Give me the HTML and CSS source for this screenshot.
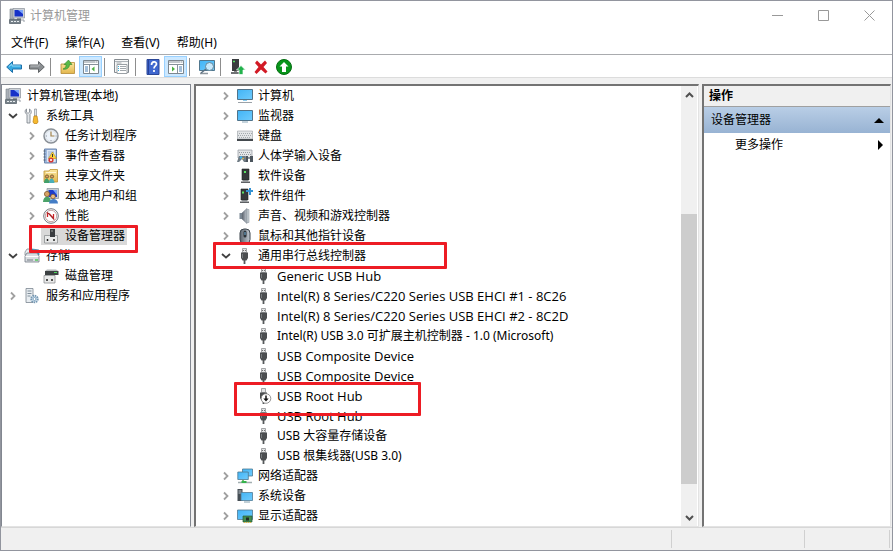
FILE: index.html
```html
<!DOCTYPE html>
<html lang="zh-CN">
<head>
  <meta charset="UTF-8">
  <meta name="viewport" content="width=device-width, initial-scale=1.0">
  <title>计算机管理</title>
  <link rel="stylesheet" href="styles.css">
</head>
<body>
  <svg class="sprite" aria-hidden="true">
    <defs>
      <linearGradient id="screen" x1="0" y1="0" x2="1" y2="1">
        <stop offset="0" stop-color="#42b4f6"/>
        <stop offset="1" stop-color="#6fcbfd"/>
      </linearGradient>
      <linearGradient id="metal" x1="0" y1="0" x2="1" y2="0">
        <stop offset="0" stop-color="#59616b"/>
        <stop offset="1" stop-color="#c3cad2"/>
      </linearGradient>
      <linearGradient id="folder" x1="0" y1="0" x2="0" y2="1">
        <stop offset="0" stop-color="#fbe7a0"/>
        <stop offset="1" stop-color="#e3b64c"/>
      </linearGradient>
    </defs>
    <symbol id="i-right" viewBox="0 0 16 16"><path d="M6 4.500 9.500 8 6 11.500" fill="none" stroke="#a0a0a0" stroke-width="1.800"/></symbol>
    <symbol id="i-down" viewBox="0 0 16 16"><path d="M4 6 8 9.500 12 6" fill="none" stroke="#404040" stroke-width="1.800"/></symbol>
    <symbol id="i-manage" viewBox="0 0 16 16">
      <path d="M1 1h4v10H1z" fill="#aab0b8" stroke="#777f88" stroke-width=".6"/>
      <path d="M4 .5h11.500v9.500H4z" fill="#cdd2d8" stroke="#8a9099" stroke-width=".7"/>
      <path d="M5.500 2h8.500v6.500H5.500z" fill="#1732c8"/>
      <path d="M9 2h5v4z" fill="#7ba4fa"/>
      <path d="M8 10h4v2H8z" fill="#8d949c"/>
      <path d="M.5 11.500h11v4H.5z" fill="#77828a" stroke="#4f5961" stroke-width=".7"/>
      <path d="M2 13.500h2M5 13.500h2M8 13.500h2" stroke="#e9edf0"/>
      <path d="M12 12h3v2" fill="none" stroke="#9aa0a7"/>
    </symbol>
    <symbol id="i-tools" viewBox="0 0 16 16">
      <path d="M2.500 1v3l1.500 1.500L5.500 4V1c2 1 2.500 4 .5 5.500V15H3V6.500C.5 5 .7 2 2.500 1z" fill="#e3e6e9" stroke="#777e86" stroke-width=".8"/>
      <path d="M10.500 1h2v7h-2z" fill="#dfe3e7" stroke="#7b828a" stroke-width=".6"/>
      <path d="M10 8h3l1 6-1 1.500h-3L9 14z" fill="#f5b92e" stroke="#bd8013" stroke-width=".7"/>
    </symbol>
    <symbol id="i-clock" viewBox="0 0 16 16">
      <circle cx="8" cy="8" r="7" fill="#f2f5f8" stroke="#8a9097" stroke-width="1.500"/>
      <circle cx="8" cy="8" r="5.500" fill="#edf3fa" stroke="#c9d0d8" stroke-width=".6"/>
      <path d="M8 3.500V8h3.500" fill="none" stroke="#a3844c" stroke-width="1.200"/>
      <path d="M8 13v-1M3 8h1M12.500 8h1" stroke="#7a828b" stroke-width=".8"/>
    </symbol>
    <symbol id="i-event" viewBox="0 0 16 16">
      <path d="M1.500 1h12v14h-12z" fill="#9db7dc" stroke="#6d86ad"/>
      <path d="M4 2h8.500v12H4z" fill="#dce6f4"/>
      <path d="M5 4h6M5 6h4M5 8h3M5 10h2" stroke="#8ca3c4" stroke-width=".8"/>
      <path d="M.5 3h2M.5 6h2M.5 9h2M.5 12h2" stroke="#54606e"/>
      <path d="m9.500 4 4 6.500h-8z" fill="#ffd93b" stroke="#b98a10" stroke-width=".6"/>
      <path d="M9.500 6v3" stroke="#333"/>
      <circle cx="8" cy="12" r="2.600" fill="#d93a35"/>
      <path d="m7 11 2 2m0-2-2 2" stroke="#fff" stroke-width=".8"/>
    </symbol>
    <symbol id="i-share" viewBox="0 0 16 16">
      <path d="M1 3h5l1-1.500h7.500V14H1z" fill="url(#folder)" stroke="#bd9334" stroke-width=".8"/>
      <path d="M3 4.500h10" stroke="#fff6d4"/>
      <circle cx="4" cy="8.500" r="1.600" fill="#d9a066" stroke="#584019" stroke-width=".7"/>
      <circle cx="9" cy="8.500" r="1.600" fill="#d9a066" stroke="#584019" stroke-width=".7"/>
      <path d="M1 15c0-6 5-6 5.500 0z" fill="#42a06b"/>
      <path d="M6 15c0-6 5-6 5.500 0z" fill="#49aeb9"/>
    </symbol>
    <symbol id="i-users" viewBox="0 0 16 16">
      <path d="M4 .5h11.500v10H4z" fill="#c5cbd3" stroke="#87909a" stroke-width=".7"/>
      <path d="M5.500 2H14v7H5.500z" fill="#1d3dcc"/>
      <path d="M10 2h4v5z" fill="#7aa3f5"/>
      <circle cx="4" cy="6" r="2.600" fill="#d8a366" stroke="#754e22" stroke-width=".7"/>
      <circle cx="10" cy="8.500" r="2.300" fill="#e8bd83" stroke="#754e22" stroke-width=".7"/>
      <path d="M0 14c0-7 8-7 8 0z" fill="#4ba269"/>
      <path d="M6 15.500c0-6 9-6 9 0z" fill="#447dc6"/>
    </symbol>
    <symbol id="i-perf" viewBox="0 0 16 16">
      <circle cx="8" cy="8" r="7.300" fill="#fff" stroke="#737980"/>
      <circle cx="8" cy="8" r="5.700" fill="#fff" stroke="#9b6a6a" stroke-width=".6"/>
      <path d="M4.500 9V5l2 1 4 4.500V6" fill="none" stroke="#cc2327" stroke-width="1.300"/>
      <path d="m4.500 4.500 6.500 7" stroke="#7d2224" stroke-width=".8"/>
    </symbol>
    <symbol id="i-devmgr" viewBox="0 0 16 16">
      <path d="M7 1h5v7H7z" fill="#393c40"/>
      <path d="M8 3h2" stroke="#9aa09c"/>
      <path d="M1.500 7.500h13V15h-13z" fill="#e9eaea" stroke="#8d9092" stroke-width=".8"/>
      <path d="M7 7h5v2H7z" fill="#393c40"/>
      <path d="M4.500 11v2M11 11v2" stroke="#222" stroke-width="1.500"/>
    </symbol>
    <symbol id="i-storage" viewBox="0 0 16 16">
      <path d="M1 4 3 1h5v6H1z" fill="#e7ebef" stroke="#858d96" stroke-width=".8"/>
      <path d="m8 1 7 1v5H8z" fill="#1aa7df" stroke="#4c7890" stroke-width=".7"/>
      <path d="M1 8 3 5h10l2 3v6H1z" fill="#d9dde1" stroke="#737c85" stroke-width=".8"/>
      <path d="M1.500 8.500h13" stroke="#fff"/>
      <path d="M3 12h6" stroke="#747d85"/>
      <path d="M11 12h3" stroke="#51c758" stroke-width="1.500"/>
    </symbol>
    <symbol id="i-disk" viewBox="0 0 16 16">
      <path d="M2 3 4 1.500h9L15.500 3z" fill="#b4b8ba"/>
      <path d="M2 3h13.500v4H2z" fill="#3c4042"/>
      <path d="M11 4.500h3" stroke="#4ed95e"/>
      <path d="M1 7.500h11V15H1z" fill="#e9eaea" stroke="#8d9092" stroke-width=".8"/>
      <path d="M4 11v2M9 11v2" stroke="#222" stroke-width="1.500"/>
    </symbol>
    <symbol id="i-service" viewBox="0 0 16 16">
      <path d="M2 .5h7v14H2z" fill="#e8edf1" stroke="#7b8791" stroke-width=".8"/>
      <path d="M3.500 3h4M3.500 5.500h4M3.500 8h3" stroke="#7f8d99"/>
      <circle cx="10.500" cy="11" r="3.300" fill="#dbe8f2" stroke="#7497b2" stroke-width="1.800" stroke-dasharray="1.500 .7"/>
      <circle cx="10.500" cy="11" r="1.500" fill="#fff" stroke="#5384a9" stroke-width=".7"/>
    </symbol>
    <symbol id="i-computer" viewBox="0 0 16 16">
      <path d="M.5 1.500h15v10H.5z" fill="url(#screen)" stroke="#50738a"/>
      <path d="M1 14.500h14" stroke="#9ba2a8"/><path d="M6 12.500h4" stroke="#8fcdee"/>
    </symbol>
    <symbol id="i-monitor" viewBox="0 0 16 16">
      <path d="M.5 2.500h15v10H.5z" fill="url(#screen)" stroke="#50738a"/>
      <path d="M5 14h6" stroke="#8ba8b9"/>
    </symbol>
    <symbol id="i-keyboard" viewBox="0 0 16 16">
      <path d="M.5 3h15v8H.5z" fill="#e3e5e7" stroke="#9aa0a5" stroke-width=".6"/>
      <path d="M0 11h16v2H0z" fill="#44494e"/>
      <path d="M2 5.500h13M1 7.500h13M2 9.500h12" stroke="#a3a9ae" stroke-dasharray="1 1"/>
    </symbol>
    <symbol id="i-hid" viewBox="0 0 16 16">
      <path d="M1 2h14v8H1z" fill="#e3e5e7" stroke="#90979d" stroke-width=".7"/>
      <path d="M2 4.500h12M3 6.500h12" stroke="#969ca1" stroke-dasharray="1 1"/>
      <path d="M0 14 2 8h6l1 6H7l-2-3-3 3z" fill="#6f7b84"/>
      <path d="M8.500 8H11v6H8.500zM13 8h3v6h-3z" fill="#4c555d"/>
      <path d="M11 10h2" stroke="#4c555d"/>
      <circle cx="4" cy="9.500" r="1.200" fill="#3fb4f0"/><circle cx="6" cy="10.500" r=".8" fill="#f4c43b"/>
    </symbol>
    <symbol id="i-soft" viewBox="0 0 16 16">
      <path d="M5 1h7v11H5z" fill="#36393b" stroke="#1f2123" stroke-width=".6"/>
      <path d="M7 4h2" stroke="#5be463" stroke-width="2"/>
      <path d="M4 13.500h9v1.500H4z" fill="#5d6063"/><path d="M6 12h5v1.500H6z" fill="#85898c"/>
    </symbol>
    <symbol id="i-comp" viewBox="0 0 16 16">
      <path d="M4 1h7v11H4z" fill="#36393b" stroke="#1f2123" stroke-width=".6"/>
      <path d="M5 4.500h2" stroke="#5be463" stroke-width="2"/>
      <path d="M3 13.500h9v1.500H3z" fill="#5d6063"/><path d="M5 12h5v1.500H5z" fill="#85898c"/>
      <path d="M12 0h2v2h2v2h-2v3h-2V4h-3V2h3z" fill="#3593d4"/>
    </symbol>
    <symbol id="i-sound" viewBox="0 0 16 16">
      <path d="M2.500 5H5v6H2.500z" fill="#7b8894"/>
      <path d="M5 5 10 .5v15L5 11z" fill="url(#metal)" stroke="#6e7984" stroke-width=".6"/>
      <path d="M10 1.500h2v13h-2z" fill="#c8ced4" stroke="#87919a" stroke-width=".5"/>
    </symbol>
    <symbol id="i-mouse" viewBox="0 0 16 16">
      <rect x="3" y="1" width="10" height="14.500" rx="4" fill="url(#metal)" stroke="#3d454c"/>
      <rect x="6.500" y="2.500" width="3" height="7" rx="1.500" fill="#2c3339"/>
      <path d="M8 4v3" stroke="#75b5df"/>
    </symbol>
    <symbol id="i-usb" viewBox="0 0 16 16">
      <path d="M5.500.5h4v4h-4z" fill="#e4e5e6" stroke="#8f9294" stroke-width=".8"/>
      <path d="M6.500 2v1M8.500 2v1" stroke="#555" stroke-width=".8"/>
      <path d="M4 4.500h7V10l-1.500 2.500h-4L4 10z" fill="#4b4e50"/>
      <path d="M5.500 6v4" stroke="#777b7e"/>
      <path d="M7.500 12v4" stroke="#55585a" stroke-width="1.800"/>
    </symbol>
    <symbol id="i-usboff" viewBox="0 0 16 16">
      <path d="M5.500.5h4v4h-4z" fill="#e4e5e6" stroke="#8f9294" stroke-width=".8"/>
      <path d="M4 4.500h7V10l-1.500 2.500h-4L4 10z" fill="#4b4e50"/>
      <path d="M7.500 12v4" stroke="#55585a" stroke-width="1.800"/>
      <circle cx="10" cy="10.500" r="4.800" fill="#fff" stroke="#777" stroke-width=".8"/>
      <path d="M10 7.500v3.500" stroke="#111" stroke-width="1.500"/><path d="M7.300 10.500h5.400L10 13.500z" fill="#111"/>
    </symbol>
    <symbol id="i-network" viewBox="0 0 16 16">
      <path d="M5.500 1h10v7h-10z" fill="url(#screen)" stroke="#4c7891" stroke-width=".8"/>
      <path d="M.8 4h10.500v7.500H.8z" fill="url(#screen)" stroke="#4c7891" stroke-width=".8"/>
      <path d="M6 12v2" stroke="#75bc73" stroke-width="2"/>
      <path d="M1 14.500h14" stroke="#a3afb1" stroke-width="1.500"/><path d="M4.500 14h5" stroke="#35b34b" stroke-width="2"/>
    </symbol>
    <symbol id="i-system" viewBox="0 0 16 16">
      <path d="M.5 1h5v12h-5z" fill="#454d54"/><path d="M1.500 3h3M1.500 5h3" stroke="#bbc3ca"/>
      <path d="M4 4.500h11.500v8H4z" fill="url(#screen)" stroke="#517b95" stroke-width=".8"/>
      <path d="M7 14h6" stroke="#849fad"/>
    </symbol>
    <symbol id="i-display" viewBox="0 0 16 16">
      <path d="M.5 2h15v9.500H.5z" fill="url(#screen)" stroke="#507890" stroke-width=".8"/>
      <path d="M6 8h9v6H6z" fill="#438c51" stroke="#275b34" stroke-width=".7"/>
      <path d="M9 9.500h3v3H9z" fill="#222b25"/><path d="M7 14.500h7" stroke="#e9b63a" stroke-dasharray="1 1"/>
    </symbol>
    <symbol id="t-back" viewBox="0 0 16 16"><path d="M.7 8 6.500 2.500V6h9v4h-9v3.500z" fill="#37a9e1" stroke="#1d6ea8"/><path d="M3 7.500 6 5v2h8.500" fill="none" stroke="#94dbf8"/></symbol>
    <symbol id="t-forward" viewBox="0 0 16 16"><path d="M15.300 8 9.500 2.500V6h-9v4h9v3.500z" fill="#8b8f92" stroke="#606467"/><path d="M1.500 7H10V5" fill="none" stroke="#b8bbbd"/></symbol>
    <symbol id="t-up" viewBox="0 0 16 16">
      <path d="M1 5h7l1-1.500h5.500v11H1z" fill="url(#folder)" stroke="#b58c35" stroke-width=".8"/>
      <path d="M3 10c3-1 3-3 3-4.500H4L8.500 1 12 5.500H9.500C9.500 9 6 11 3 10z" fill="#58b947" stroke="#318426" stroke-width=".6"/>
    </symbol>
    <symbol id="t-tree" viewBox="0 0 16 16">
      <path d="M.5 1.500h15v13H.5z" fill="#fff" stroke="#7d878f"/><path d="M1 3h14M1 5.500h14" stroke="#87919a"/>
      <path d="M12 3h1M14 3h1" stroke="#fff"/><path d="M6.500 6v8" stroke="#87919a"/>
      <path d="M2 8h3M2 10h3M2 12h3" stroke="#4b80b4"/><path d="M11.500 7.500v5L8.500 10z" fill="#4bb342"/>
    </symbol>
    <symbol id="t-actions" viewBox="0 0 16 16">
      <path d="M.5 1.500h15v13H.5z" fill="#fff" stroke="#7d878f"/><path d="M1 3h14M1 5.500h14" stroke="#87919a"/>
      <path d="M12 3h1M14 3h1" stroke="#fff"/><path d="M9.500 6v8" stroke="#87919a"/>
      <path d="M11 8h3M11 10h3M11 12h3" stroke="#4b80b4"/><path d="M4 7.500v5L7 10z" fill="#4bb342"/>
    </symbol>
    <symbol id="t-props" viewBox="0 0 16 16">
      <path d="M.5.5h14v13H.5z" fill="#f6f7f7" stroke="#858b90"/><path d="M1 2.500h13" stroke="#aeb4b9"/>
      <path d="M3 5.500h10v9H3z" fill="#fff" stroke="#9aa0a5"/>
      <path d="M4 7.500h1M4 9.500h1M4 11.500h1" stroke="#3caed3"/><path d="M6 7.500h6M6 9.500h6M6 11.500h6M2.500 4h5" stroke="#a1a7ac"/>
    </symbol>
    <symbol id="t-help" viewBox="0 0 16 16"><path d="M2 .5h12v15H2z" fill="#3f67cf" stroke="#2b4797"/><path d="M3.500 1v14" stroke="#26429a"/><path d="M6.500 6c0-4 5-4 5-1 0 2-2.500 2-2.500 4.500M9 11v2" fill="none" stroke="#fff" stroke-width="1.700"/></symbol>
    <symbol id="t-scan" viewBox="0 0 16 16">
      <path d="M.5 1.500h15v10H.5z" fill="url(#screen)" stroke="#51778e"/>
      <path d="M1 14.500h8" stroke="#8e979f" stroke-width="1.500"/><path d="m7 10-5 4" stroke="#5d7283" stroke-width="1.600"/>
      <circle cx="10.500" cy="7.500" r="4" fill="#c7e9fc" stroke="#63879d"/>
    </symbol>
    <symbol id="t-update" viewBox="0 0 16 16">
      <path d="M2 0h7v12H2z" fill="#393c3e"/><path d="M3 2.500h2" stroke="#57df62" stroke-width="1.500"/>
      <path d="M1 14h9" stroke="#606366" stroke-width="1.800"/><path d="M4 12h3v1H4z" fill="#888"/>
      <path d="m11 6.500 4.500 4.500H13v4.500H9V11H6.500z" fill="#22b14c" stroke="#fff" stroke-width=".7"/>
    </symbol>
    <symbol id="t-remove" viewBox="0 0 16 16"><path d="m2 4 2-2.500 4 4 4-4L14 4l-3.500 4 4 4.500-2 2L8 10.500 3.500 15l-2-2L5.500 8z" fill="#d21a25"/></symbol>
    <symbol id="t-enable" viewBox="0 0 16 16"><circle cx="8" cy="8" r="7.500" fill="#07951a" stroke="#056d12"/><path d="m8 3 4.500 4.500H10V13H6V7.500H3.500z" fill="#fff"/></symbol>
  </svg>

  <div class="window">
    <header class="titlebar">
      <svg class="icon"><use href="#i-manage"/></svg>
      <h1>计算机管理</h1>
      <div class="caption">
        <button aria-label="最小化"><svg viewBox="0 0 11 11"><path d="M0 5.500h11"/></svg></button>
        <button aria-label="最大化"><svg viewBox="0 0 11 11"><path d="M.5.500h10v10H.5z"/></svg></button>
        <button aria-label="关闭"><svg viewBox="0 0 11 11"><path d="m.5.500 10 10m0-10-10 10"/></svg></button>
      </div>
    </header>

    <nav class="menubar">
      <button>文件(F)</button>
      <button>操作(A)</button>
      <button>查看(V)</button>
      <button>帮助(H)</button>
    </nav>

    <div class="toolbar">
      <button aria-label="后退"><svg class="icon"><use href="#t-back"/></svg></button>
      <button aria-label="前进"><svg class="icon"><use href="#t-forward"/></svg></button>
      <span class="sep"></span>
      <button aria-label="向上"><svg class="icon"><use href="#t-up"/></svg></button>
      <button class="on" aria-label="显示控制台树"><svg class="icon"><use href="#t-tree"/></svg></button>
      <span class="sep"></span>
      <button aria-label="属性"><svg class="icon"><use href="#t-props"/></svg></button>
      <span class="sep"></span>
      <button aria-label="帮助"><svg class="icon"><use href="#t-help"/></svg></button>
      <button class="on" aria-label="显示操作窗格"><svg class="icon"><use href="#t-actions"/></svg></button>
      <span class="sep"></span>
      <button aria-label="扫描检测硬件改动"><svg class="icon"><use href="#t-scan"/></svg></button>
      <span class="sep"></span>
      <button aria-label="更新驱动程序"><svg class="icon"><use href="#t-update"/></svg></button>
      <button aria-label="卸载设备"><svg class="icon"><use href="#t-remove"/></svg></button>
      <button aria-label="启用设备"><svg class="icon"><use href="#t-enable"/></svg></button>
    </div>

    <main class="panes">
      <section class="pane console">
        <ul class="tree">
          <li><div class="row root"><span class="node"><svg class="icon"><use href="#i-manage"/></svg>计算机管理(本地)</span></div></li>
          <li>
            <div class="row"><button class="toggle" aria-label="折叠"><svg class="icon"><use href="#i-down"/></svg></button><span class="node"><svg class="icon"><use href="#i-tools"/></svg>系统工具</span></div>
            <ul>
              <li><div class="row"><button class="toggle" aria-label="展开"><svg class="icon"><use href="#i-right"/></svg></button><span class="node"><svg class="icon"><use href="#i-clock"/></svg>任务计划程序</span></div></li>
              <li><div class="row"><button class="toggle" aria-label="展开"><svg class="icon"><use href="#i-right"/></svg></button><span class="node"><svg class="icon"><use href="#i-event"/></svg>事件查看器</span></div></li>
              <li><div class="row"><button class="toggle" aria-label="展开"><svg class="icon"><use href="#i-right"/></svg></button><span class="node"><svg class="icon"><use href="#i-share"/></svg>共享文件夹</span></div></li>
              <li><div class="row"><button class="toggle" aria-label="展开"><svg class="icon"><use href="#i-right"/></svg></button><span class="node"><svg class="icon"><use href="#i-users"/></svg>本地用户和组</span></div></li>
              <li><div class="row"><button class="toggle" aria-label="展开"><svg class="icon"><use href="#i-right"/></svg></button><span class="node"><svg class="icon"><use href="#i-perf"/></svg>性能</span></div></li>
              <li><div class="row leaf"><span class="node selected"><svg class="icon"><use href="#i-devmgr"/></svg>设备管理器</span><span class="mark mark-manager"></span></div></li>
            </ul>
          </li>
          <li>
            <div class="row"><button class="toggle" aria-label="折叠"><svg class="icon"><use href="#i-down"/></svg></button><span class="node"><svg class="icon"><use href="#i-storage"/></svg>存储</span></div>
            <ul>
              <li><div class="row leaf"><span class="node"><svg class="icon"><use href="#i-disk"/></svg>磁盘管理</span></div></li>
            </ul>
          </li>
          <li><div class="row"><button class="toggle" aria-label="展开"><svg class="icon"><use href="#i-right"/></svg></button><span class="node"><svg class="icon"><use href="#i-service"/></svg>服务和应用程序</span></div></li>
        </ul>
      </section>

      <section class="pane devices">
        <ul class="tree">
          <li><div class="row"><button class="toggle" aria-label="展开"><svg class="icon"><use href="#i-right"/></svg></button><span class="node"><svg class="icon"><use href="#i-computer"/></svg>计算机</span></div></li>
          <li><div class="row"><button class="toggle" aria-label="展开"><svg class="icon"><use href="#i-right"/></svg></button><span class="node"><svg class="icon"><use href="#i-monitor"/></svg>监视器</span></div></li>
          <li><div class="row"><button class="toggle" aria-label="展开"><svg class="icon"><use href="#i-right"/></svg></button><span class="node"><svg class="icon"><use href="#i-keyboard"/></svg>键盘</span></div></li>
          <li><div class="row"><button class="toggle" aria-label="展开"><svg class="icon"><use href="#i-right"/></svg></button><span class="node"><svg class="icon"><use href="#i-hid"/></svg>人体学输入设备</span></div></li>
          <li><div class="row"><button class="toggle" aria-label="展开"><svg class="icon"><use href="#i-right"/></svg></button><span class="node"><svg class="icon"><use href="#i-soft"/></svg>软件设备</span></div></li>
          <li><div class="row"><button class="toggle" aria-label="展开"><svg class="icon"><use href="#i-right"/></svg></button><span class="node"><svg class="icon"><use href="#i-comp"/></svg>软件组件</span></div></li>
          <li><div class="row"><button class="toggle" aria-label="展开"><svg class="icon"><use href="#i-right"/></svg></button><span class="node"><svg class="icon"><use href="#i-sound"/></svg>声音、视频和游戏控制器</span></div></li>
          <li><div class="row"><button class="toggle" aria-label="展开"><svg class="icon"><use href="#i-right"/></svg></button><span class="node"><svg class="icon"><use href="#i-mouse"/></svg>鼠标和其他指针设备</span></div></li>
          <li>
            <div class="row"><button class="toggle" aria-label="折叠"><svg class="icon"><use href="#i-down"/></svg></button><span class="node"><svg class="icon"><use href="#i-usb"/></svg>通用串行总线控制器</span><span class="mark mark-usb"></span></div>
            <ul>
              <li><div class="row leaf"><span class="node" lang="en"><svg class="icon"><use href="#i-usb"/></svg>Generic USB Hub</span></div></li>
              <li><div class="row leaf"><span class="node" lang="en"><svg class="icon"><use href="#i-usb"/></svg>Intel(R) 8 Series/C220 Series USB EHCI #1 - 8C26</span></div></li>
              <li><div class="row leaf"><span class="node" lang="en"><svg class="icon"><use href="#i-usb"/></svg>Intel(R) 8 Series/C220 Series USB EHCI #2 - 8C2D</span></div></li>
              <li><div class="row leaf"><span class="node"><svg class="icon"><use href="#i-usb"/></svg>Intel(R) USB 3.0 可扩展主机控制器 - 1.0 (Microsoft)</span></div></li>
              <li><div class="row leaf"><span class="node" lang="en"><svg class="icon"><use href="#i-usb"/></svg>USB Composite Device</span></div></li>
              <li><div class="row leaf"><span class="node" lang="en"><svg class="icon"><use href="#i-usb"/></svg>USB Composite Device</span></div></li>
              <li><div class="row leaf"><span class="node" lang="en"><svg class="icon"><use href="#i-usboff"/></svg>USB Root Hub</span><span class="mark mark-hub"></span></div></li>
              <li><div class="row leaf"><span class="node" lang="en"><svg class="icon"><use href="#i-usb"/></svg>USB Root Hub</span></div></li>
              <li><div class="row leaf"><span class="node"><svg class="icon"><use href="#i-usb"/></svg>USB 大容量存储设备</span></div></li>
              <li><div class="row leaf"><span class="node"><svg class="icon"><use href="#i-usb"/></svg>USB 根集线器(USB 3.0)</span></div></li>
            </ul>
          </li>
          <li><div class="row"><button class="toggle" aria-label="展开"><svg class="icon"><use href="#i-right"/></svg></button><span class="node"><svg class="icon"><use href="#i-network"/></svg>网络适配器</span></div></li>
          <li><div class="row"><button class="toggle" aria-label="展开"><svg class="icon"><use href="#i-right"/></svg></button><span class="node"><svg class="icon"><use href="#i-system"/></svg>系统设备</span></div></li>
          <li><div class="row"><button class="toggle" aria-label="展开"><svg class="icon"><use href="#i-right"/></svg></button><span class="node"><svg class="icon"><use href="#i-display"/></svg>显示适配器</span></div></li>
        </ul>
        <div class="scrollbar">
          <button aria-label="向上滚动"><svg viewBox="0 0 9 6"><path d="m1 5 3.500-3.500L8 5"/></svg></button>
          <div class="track"><div class="thumb"></div></div>
          <button aria-label="向下滚动"><svg viewBox="0 0 9 6"><path d="m1 1 3.500 3.500L8 1"/></svg></button>
        </div>
      </section>

      <aside class="pane actions">
        <h2>操作</h2>
        <button class="group">设备管理器<svg viewBox="0 0 10 5"><path d="m0 5 5-5 5 5z"/></svg></button>
        <button class="more">更多操作<svg class="side" viewBox="0 0 5 10"><path d="m0 0 5 5-5 5z"/></svg></button>
      </aside>
    </main>

    <footer class="statusbar"><span></span><span></span><span></span></footer>
  </div>
</body>
</html>
```
FILE: styles.css
```css
* {
  box-sizing: border-box;
}
body {
  margin: 0;
  font-family: "Noto Sans", "Noto Sans CJK SC", sans-serif;
  font-size: 12px;
  line-height: 20px;
  color: #000;
}
button {
  padding: 0;
  border: 0;
  background: none;
  font: inherit;
  color: inherit;
}
.sprite {
  position: absolute;
  width: 0;
  height: 0;
}
.icon {
  display: block;
  width: 16px;
  height: 16px;
  flex: none;
}
.window {
  display: flex;
  flex-direction: column;
  min-height: 100vh;
  border: 1px solid #92959e;
  background: #f0f0f0;
}

/* title and menu */
.titlebar {
  display: flex;
  align-items: center;
  height: 29px;
  padding-left: 8px;
  background: #fff;
}
.titlebar h1 {
  flex: 1;
  margin: 0 0 0 5px;
  font-size: 12px;
  font-weight: 400;
  color: #999;
}
.caption {
  display: flex;
}
.caption button {
  display: flex;
  justify-content: center;
  width: 46px;
}
.caption svg {
  width: 11px;
  height: 11px;
  fill: none;
  stroke: #999;
}
.menubar {
  display: flex;
  gap: 17px;
  height: 25px;
  padding: 3px 10px 1px;
  background: #fff;
  border-bottom: 1px solid #a9abae;
}
.toolbar {
  display: flex;
  align-items: center;
  height: 23px;
  padding: 1px 0 0 1px;
  background: #fff;
  border-bottom: 1px solid #dcdcdc;
}
.toolbar button {
  display: flex;
  align-items: center;
  justify-content: center;
  width: 23px;
  height: 21px;
}
.toolbar .on {
  background: #cce8ff;
  border: 1px solid #99d1ff;
}
.sep {
  width: 1px;
  height: 18px;
  margin: 0 5px 0 2px;
  background: #8d8d8d;
}

/* panes */
.panes {
  display: flex;
  flex: 1;
  gap: 3px;
  padding: 6px 1px 0 0;
}
.pane {
  background: #fff;
  border: 1px solid #828790;
  border-bottom-color: #e3e3e3;
}
.console {
  width: 190px;
}
.devices,
.actions {
  border-width: 2px 1px 1px 2px;
  border-color: #737373 #e3e3e3 #e3e3e3 #737373;
}
.devices {
  display: flex;
  flex: 1;
  padding-right: 1px;
}
.devices .tree {
  flex: 1;
}
.actions {
  width: 189px;
}

/* trees */
.tree,
.tree ul {
  margin: 0;
  padding: 0;
  list-style: none;
}
.tree ul {
  padding-left: 19px;
}
.console .tree {
  padding: 1px 0 0 3px;
}
.devices .tree {
  padding-left: 22px;
}
.row {
  position: relative;
  display: flex;
  align-items: center;
  gap: 1px;
  height: 20px;
  white-space: nowrap;
}
.row.leaf {
  padding-left: 17px;
}
.toggle {
  width: 16px;
}
.node {
  display: flex;
  align-items: center;
  gap: 5px;
  height: 18px;
  padding: 0 2px;
}
.console .node {
  gap: 6px;
}
.root .node {
  padding: 0;
}
.node:lang(en) {
  font-family: "Open Sans", sans-serif;
  font-size: 13px;
}
.selected {
  background: #d9d9d9;
}

/* red highlight frames */
.mark {
  position: absolute;
  z-index: 1;
  border: 3px solid #ed1c24;
  border-radius: 1px;
}
.mark-manager {
  top: -1px;
  left: 5px;
  width: 109px;
  height: 28px;
}
.mark-usb {
  top: -4px;
  left: -5px;
  width: 234px;
  height: 27px;
}
.mark-hub {
  top: -4px;
  left: -3px;
  width: 187px;
  height: 34px;
}

/* scroll bar */
.scrollbar {
  display: flex;
  flex-direction: column;
  width: 16px;
  background: #f0f0f0;
}
.scrollbar button {
  display: flex;
  align-items: center;
  justify-content: center;
  height: 17px;
}
.scrollbar svg {
  width: 9px;
  height: 6px;
  fill: none;
  stroke: #505050;
  stroke-width: 2;
}
.track {
  display: flex;
  flex: 1;
  flex-direction: column;
  justify-content: flex-end;
  padding-bottom: 25px;
}
.thumb {
  height: 71%;
  background: #cdcdcd;
}

/* actions pane */
.actions h2 {
  height: 21px;
  margin: 0;
  padding-left: 5px;
  font-size: 12px;
  font-weight: 700;
  background: #f0f0f0;
  border-bottom: 1px solid #a0a0a0;
}
.actions button {
  display: flex;
  align-items: center;
  justify-content: space-between;
  width: 100%;
}
.actions svg {
  width: 10px;
  height: 5px;
}
.actions .side {
  width: 5px;
  height: 10px;
}
.actions .group {
  height: 26px;
  padding: 0 6px 0 7px;
  background: linear-gradient(#b9cee6, #98b3d3);
}
.actions .more {
  height: 24px;
  padding: 0 7px 0 31px;
}

.statusbar {
  display: flex;
  height: 23px;
  padding: 2px 2px 2px 0;
  border-top: 1px solid #d7d7d7;
}
.statusbar span {
  border-right: 1px solid #d0d0d0;
}
.statusbar span:nth-child(1) {
  flex: 1;
}
.statusbar span:nth-child(2) {
  width: 133px;
}
.statusbar span:nth-child(3) {
  width: 85px;
}
```
